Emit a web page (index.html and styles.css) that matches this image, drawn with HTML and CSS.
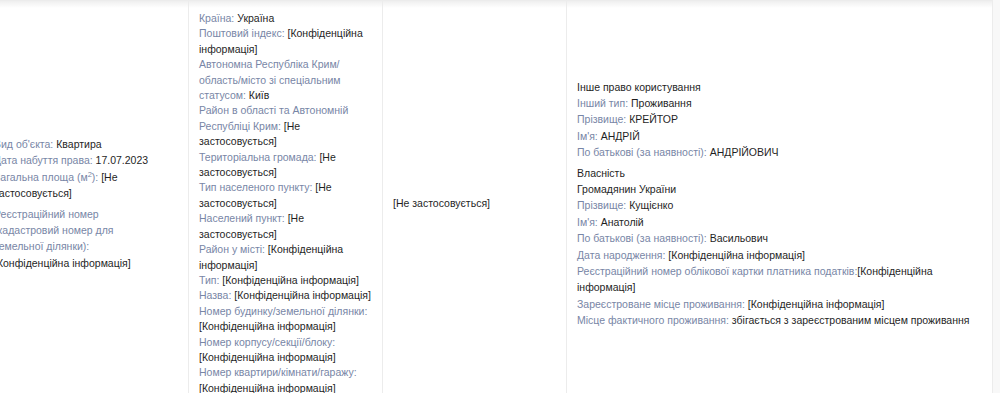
FILE: index.html
```html
<!DOCTYPE html>
<html lang="uk">
<head>
<meta charset="utf-8">
<title>Об'єкт</title>
<link rel="stylesheet" href="styles.css">
</head>
<body>
<div class="table">
  <div class="row">
    <div class="cell c1">
      <div class="group">
        <div><span class="lbl">Вид об'єкта:</span> Квартира</div>
        <div><span class="lbl">Дата набуття права:</span> 17.07.2023</div>
        <div><span class="lbl">Загальна площа (м<sup>2</sup>):</span> [Не застосовується]</div>
      </div>
      <div class="group">
        <div><span class="lbl">Реєстраційний номер (кадастровий номер для земельної ділянки):</span> [Конфіденційна інформація]</div>
      </div>
    </div>
    <div class="cell c2">
      <div><span class="lbl">Країна:</span> Україна</div>
      <div><span class="lbl">Поштовий індекс:</span> [Конфіденційна інформація]</div>
      <div><span class="lbl">Автономна Республіка Крим/<wbr>область/місто зі спеціальним статусом:</span> Київ</div>
      <div><span class="lbl">Район в області та Автономній Республіці Крим:</span> [Не застосовується]</div>
      <div><span class="lbl">Територіальна громада:</span> [Не застосовується]</div>
      <div><span class="lbl">Тип населеного пункту:</span> [Не застосовується]</div>
      <div><span class="lbl">Населений пункт:</span> [Не застосовується]</div>
      <div><span class="lbl">Район у місті:</span> [Конфіденційна інформація]</div>
      <div><span class="lbl">Тип:</span> [Конфіденційна інформація]</div>
      <div><span class="lbl">Назва:</span> [Конфіденційна інформація]</div>
      <div><span class="lbl">Номер будинку/земельної ділянки:</span> [Конфіденційна інформація]</div>
      <div><span class="lbl">Номер корпусу/секції/блоку:</span> [Конфіденційна інформація]</div>
      <div><span class="lbl">Номер квартири/кімнати/гаражу:</span> [Конфіденційна інформація]</div>
    </div>
    <div class="cell c3">
      <div>[Не застосовується]</div>
    </div>
    <div class="cell c4">
      <div class="group">
        <div>Інше право користування</div>
        <div><span class="lbl">Інший тип:</span> Проживання</div>
        <div><span class="lbl">Прізвище:</span> КРЕЙТОР</div>
        <div><span class="lbl">Ім'я:</span> АНДРІЙ</div>
        <div><span class="lbl">По батькові (за наявності):</span> АНДРІЙОВИЧ</div>
      </div>
      <div class="group">
        <div>Власність</div>
        <div>Громадянин України</div>
        <div><span class="lbl">Прізвище:</span> Кущієнко</div>
        <div><span class="lbl">Ім'я:</span> Анатолій</div>
        <div><span class="lbl">По батькові (за наявності):</span> Васильович</div>
        <div><span class="lbl">Дата народження:</span> [Конфіденційна інформація]</div>
        <div><span class="lbl">Реєстраційний номер облікової картки платника податків:</span>[Конфіденційна інформація]</div>
        <div><span class="lbl">Зареєстроване місце проживання:</span> [Конфіденційна інформація]</div>
        <div><span class="lbl">Місце фактичного проживання:</span> збігається з зареєстрованим місцем проживання</div>
      </div>
    </div>
  </div>
</div>
</body>
</html>
```
FILE: styles.css
```css
html, body {
  margin: 0;
  padding: 0;
}
body {
  background: #f8f8f8;
  font-family: "Liberation Sans", Arial, Helvetica, sans-serif;
  font-size: 10.5px;
  color: #1f1f1f;
  overflow: hidden;
  height: 393px;
}
.table {
  margin-left: -16px;
  width: 1009px;
  background: linear-gradient(#efefef, #ffffff 7px);
  border-top: 1px solid #ececec;
}
.row {
  display: grid;
  grid-template-columns: 205px 194px 184px 426px;
}
.cell {
  box-sizing: border-box;
  border-right: 1px solid #ececec;
  padding: 10px;
  display: flex;
  flex-direction: column;
  justify-content: center;
  line-height: 16.4px;
}
.c1 {
  padding-right: 28px;
}
.c2 {
  line-height: 15.4px;
  padding-right: 3px;
}
.group + .group {
  margin-top: 4px;
}
.lbl {
  color: #7886a6;
}
sup {
  font-size: 7.5px;
  line-height: 0;
}
```
